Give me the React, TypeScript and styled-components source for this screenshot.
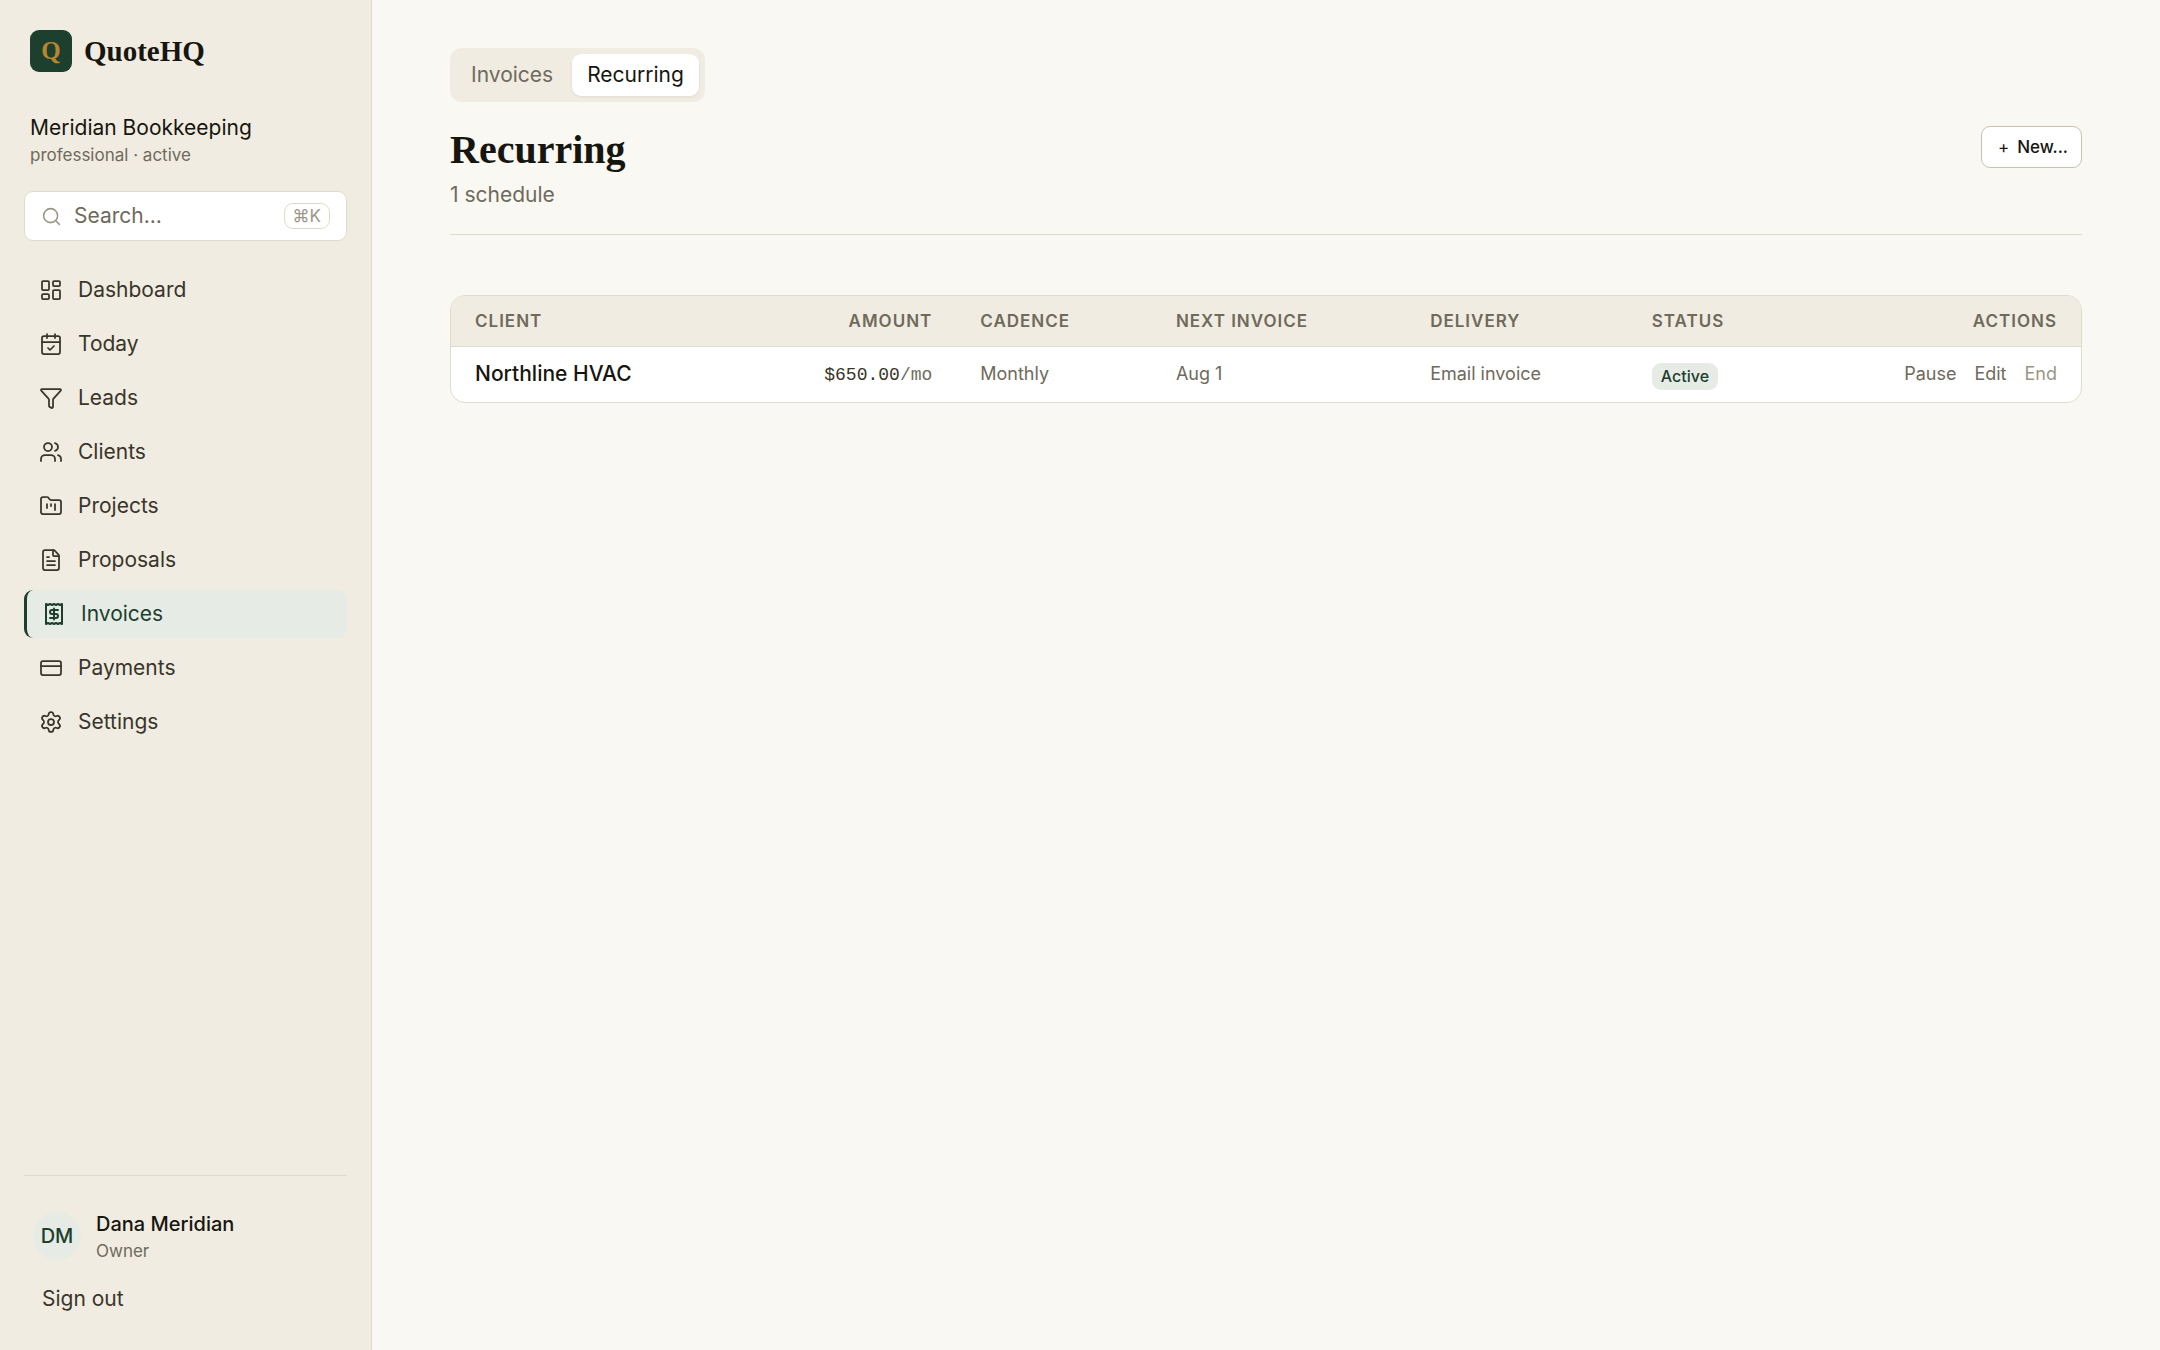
import React from 'react';
import styled, { createGlobalStyle } from 'styled-components';
import {
  CalendarCheck,
  CreditCard,
  FileText,
  FolderKanban,
  Funnel,
  LayoutDashboard,
  Receipt,
  Search,
  Settings,
  Users,
  type LucideIcon,
} from 'lucide-react';

const c = {
  page: '#faf8f2',
  panel: '#f1ece1',
  surface: '#ffffff',
  line: '#e0dccb',
  lineStrong: '#cbc2ab',
  ink: '#16160f',
  body: '#38352a',
  muted: '#6e6a5c',
  faint: '#9a9686',
  green: '#1d3f2d',
  greenSoft: '#e6ece5',
  gold: '#b8862f',
};

const sans = "Inter, 'Liberation Sans', sans-serif";
const serif = "'Liberation Serif', serif";
const mono = "'Liberation Mono', monospace";

const GlobalStyle = createGlobalStyle`
  *, *::before, *::after { box-sizing: border-box; }
  body {
    margin: 0;
    background: ${c.page};
    color: ${c.ink};
    font: 400 21px/30px ${sans};
  }
  a { color: inherit; text-decoration: none; }
  button, input { font: inherit; color: inherit; margin: 0; }
  button { cursor: pointer; }
  h1, p { margin: 0; }
`;

const Shell = styled.div`
  display: flex;
  min-height: 100vh;
`;

const Sidebar = styled.aside`
  display: flex;
  flex-direction: column;
  flex: 0 0 372px;
  min-width: 0;
  padding: 30px 24px 24px;
  background: ${c.panel};
  border-right: 1px solid ${c.line};
`;

const Brand = styled.a`
  display: flex;
  align-items: center;
  gap: 12px;
  padding: 0 6px;
  font: 700 29px/42px ${serif};
`;

const BrandMark = styled.span`
  width: 42px;
  height: 42px;
  border-radius: 9px;
  background: ${c.green};
  color: ${c.gold};
  font: 700 25px/42px ${serif};
  text-align: center;
`;

const Workspace = styled.div`
  padding: 41px 6px 24px;
`;

const Name = styled.div<{ $strong?: boolean }>`
  font-size: ${(p) => (p.$strong ? 20 : 21)}px;
  font-weight: ${(p) => (p.$strong ? 500 : 400)};
  line-height: 30px;
`;

const Meta = styled.div`
  color: ${c.muted};
  font-size: 17px;
  line-height: 24px;
`;

const SearchBox = styled.label`
  display: flex;
  align-items: center;
  gap: 12px;
  height: 50px;
  padding: 0 16px;
  background: ${c.surface};
  border: 1px solid ${c.line};
  border-radius: 9px;
  color: ${c.faint};
`;

const SearchInput = styled.input`
  flex: 1;
  width: 100%;
  min-width: 0;
  padding: 0;
  border: 0;
  outline: 0;
  background: none;
  color: ${c.ink};
  &::placeholder { color: ${c.muted}; opacity: 1; }
`;

const Shortcut = styled.kbd`
  padding: 0 8px;
  border: 1px solid ${c.line};
  border-radius: 9px;
  font: 400 17px/24px ${sans};
`;

const Nav = styled.nav`
  display: flex;
  flex-direction: column;
  gap: 6px;
  margin-top: 25px;
`;

const NavLink = styled.a<{ $active?: boolean }>`
  display: flex;
  align-items: center;
  gap: 15px;
  height: 48px;
  padding: 0 15px;
  border-radius: 9px;
  color: ${(p) => (p.$active ? c.green : c.body)};
  background: ${(p) => (p.$active ? c.greenSoft : 'transparent')};
  border-left: ${(p) => (p.$active ? `3px solid ${c.green}` : '0')};
`;

const Account = styled.div`
  margin-top: auto;
  padding-top: 30px;
  border-top: 1px solid ${c.line};
`;

const Person = styled.div`
  display: flex;
  align-items: center;
  gap: 15px;
  padding: 3px 9px;
`;

const Avatar = styled.span`
  width: 48px;
  height: 48px;
  border-radius: 50%;
  background: ${c.greenSoft};
  color: ${c.green};
  font-size: 20px;
  font-weight: 500;
  line-height: 48px;
  text-align: center;
`;

const SignOut = styled.button`
  margin-top: 6px;
  padding: 12px 18px;
  border: 0;
  background: none;
  color: ${c.body};
`;

const Main = styled.main`
  flex: 1;
  min-width: 0;
  padding: 48px 78px;
`;

const Tabs = styled.nav`
  display: flex;
  width: fit-content;
  gap: 4px;
  padding: 6px;
  background: ${c.panel};
  border-radius: 12px;
`;

const Tab = styled.a<{ $active?: boolean }>`
  padding: 6px 15px;
  border-radius: 9px;
  color: ${(p) => (p.$active ? c.ink : c.muted)};
  background: ${(p) => (p.$active ? c.surface : 'transparent')};
  box-shadow: ${(p) => (p.$active ? '0 1px 3px rgba(22, 22, 15, 0.08)' : 'none')};
`;

const PageHeader = styled.header`
  display: flex;
  align-items: flex-start;
  justify-content: space-between;
  margin-top: 24px;
  padding-bottom: 24px;
  border-bottom: 1px solid ${c.line};
`;

const Title = styled.h1`
  font: 700 40px/48px ${serif};
`;

const Count = styled.p`
  margin-top: 6px;
  color: ${c.muted};
`;

const NewButton = styled.button`
  display: flex;
  align-items: center;
  gap: 8px;
  height: 42px;
  padding: 0 13px 0 16px;
  border: 1px solid ${c.lineStrong};
  border-radius: 9px;
  background: ${c.surface};
  font-size: 17px;
  font-weight: 500;
`;

const Plus = styled.span`
  font-weight: 400;
`;

const Card = styled.section`
  margin-top: 60px;
  overflow: hidden;
  background: ${c.surface};
  border: 1px solid ${c.line};
  border-radius: 15px;
`;

const Table = styled.table`
  width: 100%;
  table-layout: fixed;
  border-collapse: collapse;
`;

const Col = styled.col<{ $share: number }>`
  width: ${(p) => p.$share}%;
`;

const Th = styled.th<{ $right?: boolean }>`
  height: 50px;
  padding: 0 24px;
  background: ${c.panel};
  border-bottom: 1px solid ${c.line};
  color: ${c.muted};
  font-size: 17px;
  font-weight: 600;
  line-height: 24px;
  letter-spacing: 1px;
  text-transform: uppercase;
  text-align: ${(p) => (p.$right ? 'right' : 'left')};
`;

const Td = styled.td<{ $right?: boolean }>`
  height: 56px;
  padding: 0 24px;
  color: ${c.muted};
  font-size: 18px;
  line-height: 24px;
  white-space: nowrap;
  text-align: ${(p) => (p.$right ? 'right' : 'left')};
`;

const Client = styled.a`
  color: ${c.ink};
  font-size: 21px;
  font-weight: 500;
`;

const Amount = styled.span`
  color: ${c.body};
  font-family: ${mono};
`;

const Per = styled.span`
  color: ${c.muted};
`;

const Badge = styled.span`
  display: block;
  width: fit-content;
  margin-top: 4px;
  padding: 0 9px;
  border-radius: 9px;
  background: ${c.greenSoft};
  color: ${c.green};
  font-size: 16px;
  font-weight: 500;
  line-height: 27px;
`;

const Actions = styled.div`
  display: flex;
  justify-content: flex-end;
  gap: 18px;
`;

const Action = styled.button<{ $faint?: boolean }>`
  padding: 0;
  border: 0;
  background: none;
  color: ${(p) => (p.$faint ? c.faint : c.muted)};
`;

const navItems: { label: string; icon: LucideIcon }[] = [
  { label: 'Dashboard', icon: LayoutDashboard },
  { label: 'Today', icon: CalendarCheck },
  { label: 'Leads', icon: Funnel },
  { label: 'Clients', icon: Users },
  { label: 'Projects', icon: FolderKanban },
  { label: 'Proposals', icon: FileText },
  { label: 'Invoices', icon: Receipt },
  { label: 'Payments', icon: CreditCard },
  { label: 'Settings', icon: Settings },
];

const columns: { label: string; share: number; right?: boolean }[] = [
  { label: 'Client', share: 19 },
  { label: 'Amount', share: 12, right: true },
  { label: 'Cadence', share: 12 },
  { label: 'Next invoice', share: 15.6 },
  { label: 'Delivery', share: 13.6 },
  { label: 'Status', share: 11.8 },
  { label: 'Actions', share: 16, right: true },
];

const schedules = [
  { client: 'Northline HVAC', amount: '$650.00', per: '/mo', cadence: 'Monthly', next: 'Aug 1', delivery: 'Email invoice', status: 'Active' },
];

export default function App() {
  return (
    <>
      <GlobalStyle />
      <Shell>
        <Sidebar>
          <Brand href="#home">
            <BrandMark aria-hidden="true">Q</BrandMark>
            QuoteHQ
          </Brand>
          <Workspace>
            <Name>Meridian Bookkeeping</Name>
            <Meta>professional · active</Meta>
          </Workspace>
          <SearchBox>
            <Search size={21} strokeWidth={1.75} />
            <SearchInput type="text" placeholder="Search..." aria-label="Search" />
            <Shortcut>⌘K</Shortcut>
          </SearchBox>
          <Nav aria-label="Primary">
            {navItems.map(({ label, icon: Icon }) => {
              const active = label === 'Invoices';
              return (
                <NavLink key={label} href={`#${label.toLowerCase()}`} $active={active} aria-current={active ? 'page' : undefined}>
                  <Icon size={24} strokeWidth={active ? 2 : 1.75} />
                  {label}
                </NavLink>
              );
            })}
          </Nav>
          <Account>
            <Person>
              <Avatar>DM</Avatar>
              <div>
                <Name $strong>Dana Meridian</Name>
                <Meta>Owner</Meta>
              </div>
            </Person>
            <SignOut type="button">Sign out</SignOut>
          </Account>
        </Sidebar>
        <Main>
          <Tabs aria-label="Invoice views">
            <Tab href="#invoices">Invoices</Tab>
            <Tab href="#recurring" $active aria-current="page">Recurring</Tab>
          </Tabs>
          <PageHeader>
            <div>
              <Title>Recurring</Title>
              <Count>{schedules.length} schedule</Count>
            </div>
            <NewButton type="button">
              <Plus>+</Plus>
              New...
            </NewButton>
          </PageHeader>
          <Card>
            <Table>
              <colgroup>
                {columns.map((col) => <Col key={col.label} $share={col.share} />)}
              </colgroup>
              <thead>
                <tr>
                  {columns.map((col) => <Th key={col.label} scope="col" $right={col.right}>{col.label}</Th>)}
                </tr>
              </thead>
              <tbody>
                {schedules.map((s) => (
                  <tr key={s.client}>
                    <Td><Client href="#client">{s.client}</Client></Td>
                    <Td $right><Amount>{s.amount}<Per>{s.per}</Per></Amount></Td>
                    <Td>{s.cadence}</Td>
                    <Td>{s.next}</Td>
                    <Td>{s.delivery}</Td>
                    <Td><Badge>{s.status}</Badge></Td>
                    <Td $right>
                      <Actions>
                        <Action type="button">Pause</Action>
                        <Action type="button">Edit</Action>
                        <Action type="button" $faint>End</Action>
                      </Actions>
                    </Td>
                  </tr>
                ))}
              </tbody>
            </Table>
          </Card>
        </Main>
      </Shell>
    </>
  );
}
